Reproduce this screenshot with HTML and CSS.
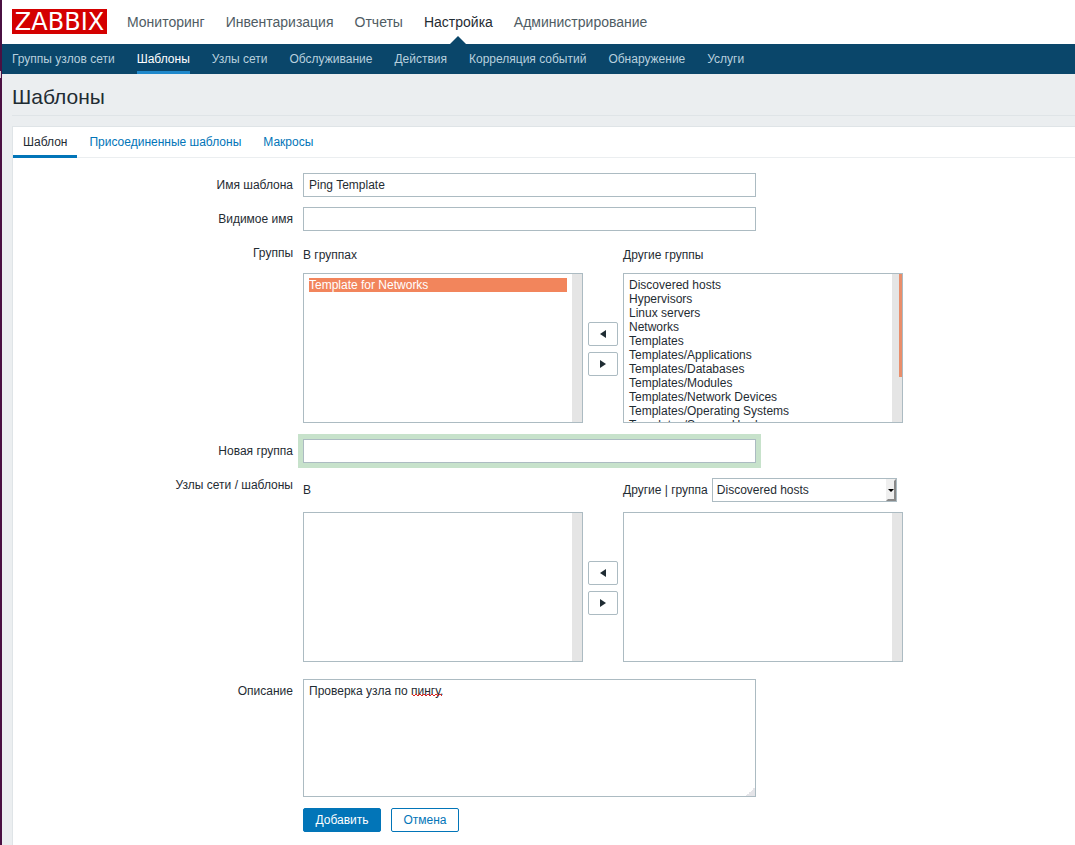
FILE: index.html
```html
<!DOCTYPE html>
<html lang="ru">
<head>
<meta charset="utf-8">
<title>Шаблоны</title>
<link rel="stylesheet" href="styles.css">
</head>
<body>
<header>
  <div class="top-bar">
    <a class="logo" href="#">ZABBIX</a>
    <nav class="main-nav" aria-label="Главное меню">
      <a href="#">Мониторинг</a>
      <a href="#">Инвентаризация</a>
      <a href="#">Отчеты</a>
      <a href="#" class="active">Настройка</a>
      <a href="#">Администрирование</a>
    </nav>
  </div>
  <nav class="sub-nav" aria-label="Настройка">
    <a href="#">Группы узлов сети</a>
    <a href="#" class="active">Шаблоны</a>
    <a href="#">Узлы сети</a>
    <a href="#">Обслуживание</a>
    <a href="#">Действия</a>
    <a href="#">Корреляция событий</a>
    <a href="#">Обнаружение</a>
    <a href="#">Услуги</a>
  </nav>
</header>
<main>
  <h1>Шаблоны</h1>
  <section class="panel">
    <nav class="tabs" aria-label="Вкладки">
      <a href="#" class="active">Шаблон</a>
      <a href="#">Присоединенные шаблоны</a>
      <a href="#">Макросы</a>
    </nav>
    <form class="form">
      <label class="caption" for="name">Имя шаблона</label>
      <input class="text" id="name" type="text" value="Ping Template">

      <label class="caption" for="visible">Видимое имя</label>
      <input class="text" id="visible" type="text">

      <span class="caption">Группы</span>
      <div class="transfer groups">
        <label class="head" for="in-groups">В группах</label>
        <label class="head head-right" for="other-groups">Другие группы</label>
        <select class="list" id="in-groups" multiple size="10">
          <option class="chosen">Template for Networks</option>
        </select>
        <div class="movers">
          <button type="button" aria-label="Добавить в группы"><svg width="6" height="8" viewBox="0 0 6 8"><path d="M6 0v8L0 4z"/></svg></button>
          <button type="button" aria-label="Убрать из групп"><svg width="6" height="8" viewBox="0 0 6 8"><path d="M0 0v8l6-4z"/></svg></button>
        </div>
        <select class="list filled" id="other-groups" multiple size="10">
          <option>Discovered hosts</option>
          <option>Hypervisors</option>
          <option>Linux servers</option>
          <option>Networks</option>
          <option>Templates</option>
          <option>Templates/Applications</option>
          <option>Templates/Databases</option>
          <option>Templates/Modules</option>
          <option>Templates/Network Devices</option>
          <option>Templates/Operating Systems</option>
          <option>Templates/Servers Hardware</option>
          <option>Templates/Virtualization</option>
          <option>Virtual machines</option>
          <option>Zabbix servers</option>
        </select>
      </div>

      <label class="caption" for="new-group">Новая группа</label>
      <input class="text highlighted" id="new-group" type="text">

      <span class="caption">Узлы сети / шаблоны</span>
      <div class="transfer hosts">
        <label class="head" for="in-hosts">В</label>
        <div class="head head-right">
          <label for="group">Другие | группа</label>
          <span class="dropdown">
            <select id="group"><option>Discovered hosts</option></select>
            <svg class="arrow" width="10" height="22" viewBox="0 0 10 22"><path fill="#efefef" d="M0 0h10v22H0z"/><path fill="#888" d="M10 0v22H0l2-2h6V2z"/><path fill="#000" d="M2 10h6l-3 3z"/></svg>
          </span>
        </div>
        <select class="list" id="in-hosts" multiple size="10"></select>
        <div class="movers">
          <button type="button" aria-label="Добавить узлы"><svg width="6" height="8" viewBox="0 0 6 8"><path d="M6 0v8L0 4z"/></svg></button>
          <button type="button" aria-label="Убрать узлы"><svg width="6" height="8" viewBox="0 0 6 8"><path d="M0 0v8l6-4z"/></svg></button>
        </div>
        <select class="list" id="other-hosts" aria-label="Другие узлы" multiple size="10"></select>
      </div>

      <label class="caption" for="description">Описание</label>
      <div class="description">
        <textarea id="description" spellcheck="false">Проверка узла по пингу.</textarea>
        <svg class="squiggle" width="32" height="4" viewBox="0 0 32 4"><path fill="none" stroke="#d22" d="M0 1l2 2 2-2 2 2 2-2 2 2 2-2 2 2 2-2 2 2 2-2 2 2 2-2 2 2 2-2 2 2"/></svg>
        <svg class="grip" width="9" height="8" viewBox="0 0 9 8"><path fill="#e4e4e8" d="M9 0v8H0V7h1V6h2V4h2V3h1V2h1V0z"/></svg>
      </div>

      <div class="actions">
        <button type="submit" class="primary">Добавить</button>
        <button type="button" class="secondary">Отмена</button>
      </div>
    </form>
  </section>
</main>
</body>
</html>
```
FILE: styles.css
```css
* { box-sizing: border-box; }
html { background: #ebeef0; }
body {
  margin: 0;
  min-height: 100vh;
  display: flex;
  flex-direction: column;
  padding-left: 2px;
  background: linear-gradient(#d8ccd6, #d8ccd6) 0 71px / 1px 7px no-repeat,
    linear-gradient(#4a1042, #4a1042) 0 0 / 2px 100% no-repeat #ebeef0;
  color: #1f2c33;
  font: 12px/14px "Liberation Sans", Arial, sans-serif;
}
a { text-decoration: none; }
input, select, textarea, button { font: inherit; color: inherit; margin: 0; border-radius: 0; }

.top-bar {
  display: flex;
  align-items: flex-start;
  gap: 20px;
  height: 44px;
  padding: 0 10px;
  background: #fff;
}
.logo {
  width: 95px;
  height: 25px;
  margin-top: 9px;
  background: #d40000;
  color: #fff;
  font: 24px/26px "DejaVu Sans", sans-serif;
  text-align: center;
}
.main-nav { display: flex; gap: 21px; font-size: 14px; }
.main-nav a { line-height: 44px; color: #4f5c64; }
.main-nav .active { position: relative; color: #1f2c33; }
.main-nav .active::after {
  content: "";
  position: absolute;
  bottom: 0;
  left: 50%;
  margin-left: -8px;
  border: 8px solid transparent;
  border-top: 0;
  border-bottom-color: #0a466a;
}

.sub-nav {
  display: flex;
  gap: 22px;
  height: 30px;
  padding: 0 10px;
  background: #0a466a;
}
.sub-nav a { line-height: 30px; color: #b8d0de; }
.sub-nav .active { color: #fff; box-shadow: inset 0 -3px #1f88cb; }

main { flex: 1; display: flex; flex-direction: column; padding-left: 10px; }
h1 {
  margin: 0 0 10px;
  padding: 10px 0 6px;
  border-bottom: 1px solid #dfe4e7;
  font-size: 21px;
  font-weight: 400;
  line-height: 25px;
}

.panel { flex: 1; background: #fff; border: 1px solid #dfe4e7; border-width: 1px 0 0 1px; }
.tabs { display: flex; gap: 2px; border-bottom: 1px solid #ebeef0; }
.tabs a { padding: 0 10px; line-height: 30px; color: #0275b8; }
.tabs .active { color: #1f2c33; box-shadow: inset 0 -2px #0275b8, 0 1px #0275b8; }

.form {
  display: grid;
  grid-template-columns: 280px minmax(0, 600px);
  gap: 10px;
  padding: 15px 0 12px;
}
.caption { text-align: right; line-height: 24px; }
.text {
  width: 453px;
  max-width: 100%;
  height: 24px;
  padding: 0 5px;
  border: 1px solid #acbbc2;
  background: #fff;
  outline: 0;
}
.highlighted { box-shadow: 0 0 0 5px #c7e2cb; }

.transfer {
  display: grid;
  grid-template-columns: 280px 30px 280px;
  column-gap: 5px;
  row-gap: 10px;
  padding: 5px 0 6px;
}
.head-right { grid-column: 3; }
.groups { row-gap: 8px; }
.groups .head { line-height: 19px; }
.hosts { padding-bottom: 7px; }
.hosts .head { display: flex; align-items: center; gap: 4px; height: 24px; white-space: nowrap; }

.list {
  width: 280px;
  height: 150px;
  padding: 4px 15px 0 5px;
  border: 1px solid #acbbc2;
  background: linear-gradient(#e5e5e5, #e5e5e5) right / 10px 100% no-repeat #fff;
  outline: 0;
  overflow: hidden;
}
.list.filled {
  background: linear-gradient(#e98e6b, #e98e6b) right top / 3px 103px no-repeat,
    linear-gradient(#e5e5e5, #e5e5e5) right / 10px 100% no-repeat #fff;
}
.list option { min-height: 14px; padding: 0; line-height: 14px; }
.list .chosen { background: #f2855c; color: #fff; }

.movers { display: flex; flex-direction: column; justify-content: center; gap: 6px; padding-top: 2px; }
.movers button {
  display: flex;
  align-items: center;
  justify-content: center;
  height: 24px;
  padding: 0;
  border: 1px solid #acbbc2;
  border-radius: 2px;
  background: #fff;
}
.movers path { fill: #1f2c33; }

.dropdown { position: relative; display: flex; }
.dropdown select {
  appearance: none;
  width: 185px;
  height: 24px;
  padding: 0 14px 0 4px;
  border: 1px solid #acbbc2;
  background: #fff;
}
.arrow { position: absolute; right: 1px; top: 1px; pointer-events: none; }

.description { position: relative; width: 453px; max-width: 100%; }
textarea {
  display: block;
  width: 100%;
  height: 118px;
  padding: 4px 5px;
  border: 1px solid #acbbc2;
  background: #fff;
  outline: 0;
  resize: none;
}
.squiggle { position: absolute; left: 109px; top: 14px; }
.grip { position: absolute; right: 1px; bottom: 1px; }

.actions { grid-column: 2; display: flex; gap: 10px; padding-top: 1px; }
.actions button { height: 24px; border: 1px solid #0275b8; border-radius: 2px; }
.primary { width: 78px; background: #0275b8; color: #fff; }
.secondary { width: 68px; background: #fff; color: #0275b8; }
```
